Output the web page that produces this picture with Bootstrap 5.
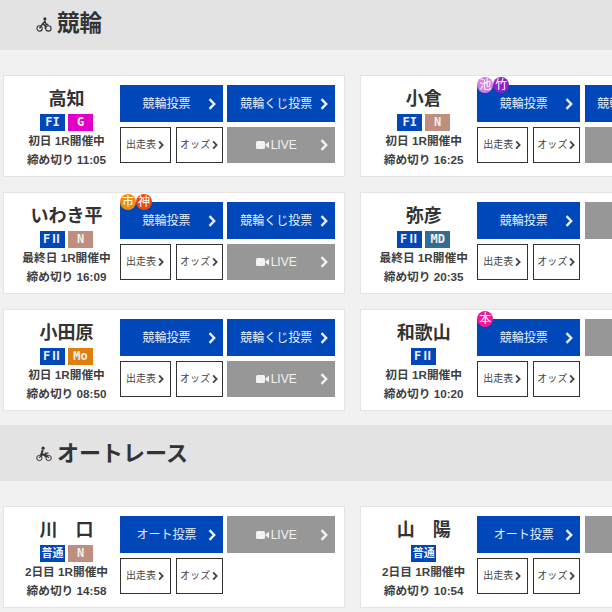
<!DOCTYPE html>
<html lang="ja">
<head>
<meta charset="utf-8">
<title>競輪・オートレース</title>
<link href="https://cdn.jsdelivr.net/npm/bootstrap@5.3.0/dist/css/bootstrap.min.css" rel="stylesheet">
<style>
html,body{overflow:hidden;height:612px}
body{background:#f1f1f1;color:#333;font-family:"Liberation Sans","Noto Sans CJK JP",sans-serif}
.page-wrap{width:720px}
.sec-head{background:#e3e3e3;height:56px;padding-left:36px;padding-top:2px;font-size:22px;font-weight:700;line-height:1;color:#333;margin:0}
.sec-first{height:50px;font-size:22.5px;padding-top:0;padding-bottom:2px}
.sec-head svg{margin-right:5px}
.race-grid{display:grid;grid-template-columns:342px 342px;column-gap:15.2px;row-gap:15px;padding:25px 0 14px 3px}
.race-grid.tail{padding-top:25px;padding-bottom:0}
.race-card{flex-direction:row;height:102px;border:1px solid #e4e4e4;border-radius:0;background:#fff;padding:9px;color:#333}
.info-col{width:107px;text-align:center;flex:none}
.venue{font-size:18px;font-weight:700;line-height:22px;margin:3px 0 4px}
.tags{gap:3px;height:17px;margin-bottom:1px}
.tag{display:block;width:25px;height:17px;padding:0;border-radius:0;font:700 12px/17px "DejaVu Sans Mono","Noto Sans CJK JP",monospace;color:#f0f0f0;letter-spacing:0}
.tag.word{font:700 11px/17px "Liberation Sans","Noto Sans CJK JP",sans-serif;letter-spacing:0}
.t-blue{background:#0047b9}.t-mag{background:#e000c8}.t-n{background:#bf8e7e}.t-md{background:#336c93}.t-mo{background:#e17f0e}
.when{font-size:11.7px;font-weight:700;line-height:18.5px;white-space:nowrap;color:#3f3f3f}
.act-grid{display:grid;grid-template-columns:103px 107.6px;grid-template-rows:37px 36px;column-gap:4.4px;row-gap:5px;position:relative}
.act{border:0;border-radius:0;padding:0;display:flex;align-items:center;position:relative;font-size:12px;line-height:1;color:#e8effa;white-space:nowrap}
.act svg{position:absolute;top:50%;transform:translateY(-50%)}
.act-vote{background:#0047b9;justify-content:center;padding-right:10px}
.act-vote:hover{background:#0047b9;color:#fff}
.act-vote svg{right:7px}
.act-live{background:#979797;justify-content:center;padding-right:10px;font-size:12px;color:#f2f2f2}
.act-live:hover{background:#979797;color:#fff}
.act-live svg.chev{right:7px}
.act-live svg.cam{position:static;transform:none;margin-right:2px}
.small-pair{gap:5px}
.act-small{background:#fff;border:1px solid #333;color:#444;font-size:10px;padding-left:5px;justify-content:flex-start}
.act-small:hover{background:#fff;color:#444}
.act-small svg{right:6px}
.w-a{width:51px}.w-b{width:47px;padding-left:3px;letter-spacing:.1px}
.w-b svg{right:4px}
.marks{position:absolute;left:0;top:-8px;gap:0;z-index:2}
.mark-dot{width:16px;height:16px;border-radius:50%;color:#fff;font-size:12px;line-height:16px;text-align:center;display:block}
.m-ike{background:#d47ce6}.m-take{background:#8a22c8}.m-ichi{background:#ee8a12}.m-kami{background:#e84a14}.m-hon{background:#ee1b96}
</style>
</head>
<body>
<svg width="0" height="0" class="position-absolute">
  <symbol id="chev" viewBox="0 0 8 12"><path d="M1.5 1.2 6.2 6 1.5 10.8" fill="none" stroke="currentColor" stroke-width="2.4"/></symbol>
  <symbol id="cam" viewBox="0 0 13 8"><rect x="0" y="0" width="9" height="8" rx="1.5" fill="currentColor"/><path d="M9.5 3.2 13 .8v6.4L9.5 4.8z" fill="currentColor"/></symbol>
</svg>
<div class="page-wrap">

<h2 class="sec-head sec-first d-flex align-items-center">
  <svg width="16" height="15" viewBox="0 0 18 17" fill="none" stroke="#333"><circle cx="4" cy="13" r="3" stroke-width="1.2"/><circle cx="14" cy="13" r="3" stroke-width="1.2"/><circle cx="10" cy="2.2" r="1.8" fill="#333" stroke="none"/><path d="M4 13 7.5 7.5 10 5l1.5 3.5H14M7.5 7.5l3 2.5V13" stroke-width="1.7"/></svg>
  <span>競輪</span>
</h2>

<div class="race-grid">
  <article class="card race-card">
    <div class="info-col">
      <div class="venue">高知</div>
      <div class="tags d-flex justify-content-center"><span class="badge tag t-blue">FI</span><span class="badge tag t-mag">G</span></div>
      <div class="when">初日 1R開催中</div>
      <div class="when">締め切り 11:05</div>
    </div>
    <div class="act-grid">
      <a class="btn act act-vote">競輪投票<svg width="8" height="12"><use href="#chev"/></svg></a>
      <a class="btn act act-vote">競輪くじ投票<svg width="8" height="12"><use href="#chev"/></svg></a>
      <div class="small-pair d-flex"><a class="btn act act-small w-a">出走表<svg width="6" height="9"><use href="#chev"/></svg></a><a class="btn act act-small w-b">オッズ<svg width="6" height="9"><use href="#chev"/></svg></a></div>
      <a class="btn act act-live"><svg class="cam" width="13" height="8"><use href="#cam"/></svg>LIVE<svg class="chev" width="8" height="12"><use href="#chev"/></svg></a>
    </div>
  </article>
  <article class="card race-card">
    <div class="info-col">
      <div class="venue">小倉</div>
      <div class="tags d-flex justify-content-center"><span class="badge tag t-blue">FI</span><span class="badge tag t-n">N</span></div>
      <div class="when">初日 1R開催中</div>
      <div class="when">締め切り 16:25</div>
    </div>
    <div class="act-grid">
      <div class="marks d-flex"><span class="mark-dot m-ike">池</span><span class="mark-dot m-take">竹</span></div>
      <a class="btn act act-vote">競輪投票<svg width="8" height="12"><use href="#chev"/></svg></a>
      <a class="btn act act-vote">競輪くじ投票<svg width="8" height="12"><use href="#chev"/></svg></a>
      <div class="small-pair d-flex"><a class="btn act act-small w-a">出走表<svg width="6" height="9"><use href="#chev"/></svg></a><a class="btn act act-small w-b">オッズ<svg width="6" height="9"><use href="#chev"/></svg></a></div>
      <a class="btn act act-live"><svg class="cam" width="13" height="8"><use href="#cam"/></svg>LIVE<svg class="chev" width="8" height="12"><use href="#chev"/></svg></a>
    </div>
  </article>

  <article class="card race-card">
    <div class="info-col">
      <div class="venue">いわき平</div>
      <div class="tags d-flex justify-content-center"><span class="badge tag t-blue">FⅡ</span><span class="badge tag t-n">N</span></div>
      <div class="when">最終日 1R開催中</div>
      <div class="when">締め切り 16:09</div>
    </div>
    <div class="act-grid">
      <div class="marks d-flex"><span class="mark-dot m-ichi">市</span><span class="mark-dot m-kami">神</span></div>
      <a class="btn act act-vote">競輪投票<svg width="8" height="12"><use href="#chev"/></svg></a>
      <a class="btn act act-vote">競輪くじ投票<svg width="8" height="12"><use href="#chev"/></svg></a>
      <div class="small-pair d-flex"><a class="btn act act-small w-a">出走表<svg width="6" height="9"><use href="#chev"/></svg></a><a class="btn act act-small w-b">オッズ<svg width="6" height="9"><use href="#chev"/></svg></a></div>
      <a class="btn act act-live"><svg class="cam" width="13" height="8"><use href="#cam"/></svg>LIVE<svg class="chev" width="8" height="12"><use href="#chev"/></svg></a>
    </div>
  </article>
  <article class="card race-card">
    <div class="info-col">
      <div class="venue">弥彦</div>
      <div class="tags d-flex justify-content-center"><span class="badge tag t-blue">FⅡ</span><span class="badge tag t-md">MD</span></div>
      <div class="when">最終日 1R開催中</div>
      <div class="when">締め切り 20:35</div>
    </div>
    <div class="act-grid">
      <a class="btn act act-vote">競輪投票<svg width="8" height="12"><use href="#chev"/></svg></a>
      <a class="btn act act-live"><svg class="cam" width="13" height="8"><use href="#cam"/></svg>LIVE<svg class="chev" width="8" height="12"><use href="#chev"/></svg></a>
      <div class="small-pair d-flex"><a class="btn act act-small w-a">出走表<svg width="6" height="9"><use href="#chev"/></svg></a><a class="btn act act-small w-b">オッズ<svg width="6" height="9"><use href="#chev"/></svg></a></div>
    </div>
  </article>

  <article class="card race-card">
    <div class="info-col">
      <div class="venue">小田原</div>
      <div class="tags d-flex justify-content-center"><span class="badge tag t-blue">FⅡ</span><span class="badge tag t-mo">Mo</span></div>
      <div class="when">初日 1R開催中</div>
      <div class="when">締め切り 08:50</div>
    </div>
    <div class="act-grid">
      <a class="btn act act-vote">競輪投票<svg width="8" height="12"><use href="#chev"/></svg></a>
      <a class="btn act act-vote">競輪くじ投票<svg width="8" height="12"><use href="#chev"/></svg></a>
      <div class="small-pair d-flex"><a class="btn act act-small w-a">出走表<svg width="6" height="9"><use href="#chev"/></svg></a><a class="btn act act-small w-b">オッズ<svg width="6" height="9"><use href="#chev"/></svg></a></div>
      <a class="btn act act-live"><svg class="cam" width="13" height="8"><use href="#cam"/></svg>LIVE<svg class="chev" width="8" height="12"><use href="#chev"/></svg></a>
    </div>
  </article>
  <article class="card race-card">
    <div class="info-col">
      <div class="venue">和歌山</div>
      <div class="tags d-flex justify-content-center"><span class="badge tag t-blue">FⅡ</span></div>
      <div class="when">初日 1R開催中</div>
      <div class="when">締め切り 10:20</div>
    </div>
    <div class="act-grid">
      <div class="marks d-flex"><span class="mark-dot m-hon">本</span></div>
      <a class="btn act act-vote">競輪投票<svg width="8" height="12"><use href="#chev"/></svg></a>
      <a class="btn act act-live"><svg class="cam" width="13" height="8"><use href="#cam"/></svg>LIVE<svg class="chev" width="8" height="12"><use href="#chev"/></svg></a>
      <div class="small-pair d-flex"><a class="btn act act-small w-a">出走表<svg width="6" height="9"><use href="#chev"/></svg></a><a class="btn act act-small w-b">オッズ<svg width="6" height="9"><use href="#chev"/></svg></a></div>
    </div>
  </article>
</div>

<h2 class="sec-head d-flex align-items-center">
  <svg width="16" height="16" viewBox="0 0 18 17" fill="none" stroke="#333"><circle cx="3.8" cy="13" r="3" stroke-width="1.1"/><circle cx="14.2" cy="13" r="3" stroke-width="1.1"/><circle cx="8" cy="2" r="1.8" fill="#333" stroke="none"/><path d="M7.5 4 6 9h4l1 3" stroke-width="2.3"/><path d="M3.8 13 6 9.5h6l2.2 3.5M10 7.5h4" stroke-width="1.4"/></svg>
  <span>オートレース</span>
</h2>

<div class="race-grid tail">
  <article class="card race-card">
    <div class="info-col">
      <div class="venue">川　口</div>
      <div class="tags d-flex justify-content-center"><span class="badge tag word t-blue">普通</span><span class="badge tag t-n">N</span></div>
      <div class="when">2日目 1R開催中</div>
      <div class="when">締め切り 14:58</div>
    </div>
    <div class="act-grid">
      <a class="btn act act-vote">オート投票<svg width="8" height="12"><use href="#chev"/></svg></a>
      <a class="btn act act-live"><svg class="cam" width="13" height="8"><use href="#cam"/></svg>LIVE<svg class="chev" width="8" height="12"><use href="#chev"/></svg></a>
      <div class="small-pair d-flex"><a class="btn act act-small w-a">出走表<svg width="6" height="9"><use href="#chev"/></svg></a><a class="btn act act-small w-b">オッズ<svg width="6" height="9"><use href="#chev"/></svg></a></div>
    </div>
  </article>
  <article class="card race-card">
    <div class="info-col">
      <div class="venue">山　陽</div>
      <div class="tags d-flex justify-content-center"><span class="badge tag word t-blue">普通</span></div>
      <div class="when">2日目 1R開催中</div>
      <div class="when">締め切り 10:54</div>
    </div>
    <div class="act-grid">
      <a class="btn act act-vote">オート投票<svg width="8" height="12"><use href="#chev"/></svg></a>
      <a class="btn act act-live"><svg class="cam" width="13" height="8"><use href="#cam"/></svg>LIVE<svg class="chev" width="8" height="12"><use href="#chev"/></svg></a>
      <div class="small-pair d-flex"><a class="btn act act-small w-a">出走表<svg width="6" height="9"><use href="#chev"/></svg></a><a class="btn act act-small w-b">オッズ<svg width="6" height="9"><use href="#chev"/></svg></a></div>
    </div>
  </article>
</div>
</div>
</body>
</html>
